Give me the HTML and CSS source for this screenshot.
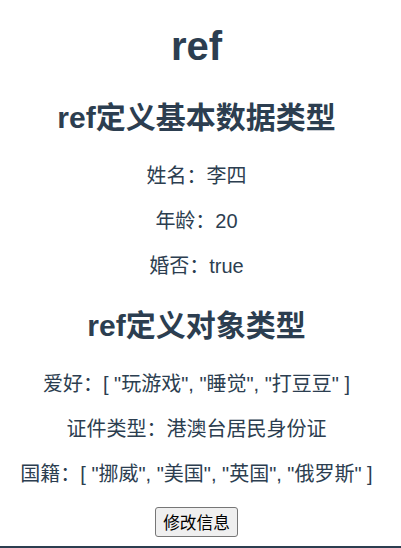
FILE: index.html
```html
<!DOCTYPE html>
<html lang="zh-CN">
<head>
<meta charset="utf-8">
<title>ref</title>
<link rel="stylesheet" href="styles.css">
</head>
<body>
<div class="app">
  <h1 class="title">ref</h1>
  <h2 class="section-title">ref定义基本数据类型</h2>
  <p class="row">姓名：李四</p>
  <p class="row">年龄：20</p>
  <p class="row">婚否：true</p>
  <h2 class="section-title">ref定义对象类型</h2>
  <p class="row">爱好：[ "玩游戏", "睡觉", "打豆豆" ]</p>
  <p class="row">证件类型：港澳台居民身份证</p>
  <p class="row">国籍：[ "挪威", "美国", "英国", "俄罗斯" ]</p>
  <button class="btn" type="button">修改信息</button>
</div>
<div class="divider"></div>
</body>
</html>
```
FILE: styles.css
```css
html, body {
  margin: 0;
  padding: 0;
  background: #ffffff;
}

.app {
  font-family: "Liberation Sans", "Noto Sans CJK SC", sans-serif;
  color: #2c3e50;
  text-align: center;
  padding: 23px 8px 0 0;
}

.title {
  font-size: 40px;
  line-height: 46px;
  font-weight: bold;
  margin: 0 0 31px;
}

.section-title {
  font-size: 30px;
  line-height: 36px;
  font-weight: bold;
  margin: 30px 0 28px;
}

.row {
  font-size: 20px;
  line-height: 24px;
  margin: 21px 0;
}

.btn {
  display: block;
  margin: 0 auto;
  box-sizing: border-box;
  height: 30px;
  padding: 0 7px;
  font-family: "Noto Sans CJK SC", "Liberation Sans", sans-serif;
  font-size: 16.7px;
  line-height: 26px;
  color: #000000;
  background: #efefef;
  border: 1px solid #767676;
  border-radius: 3px;
}

.divider {
  margin-top: 9px;
  height: 4px;
  background: #2c3e50;
}
```
